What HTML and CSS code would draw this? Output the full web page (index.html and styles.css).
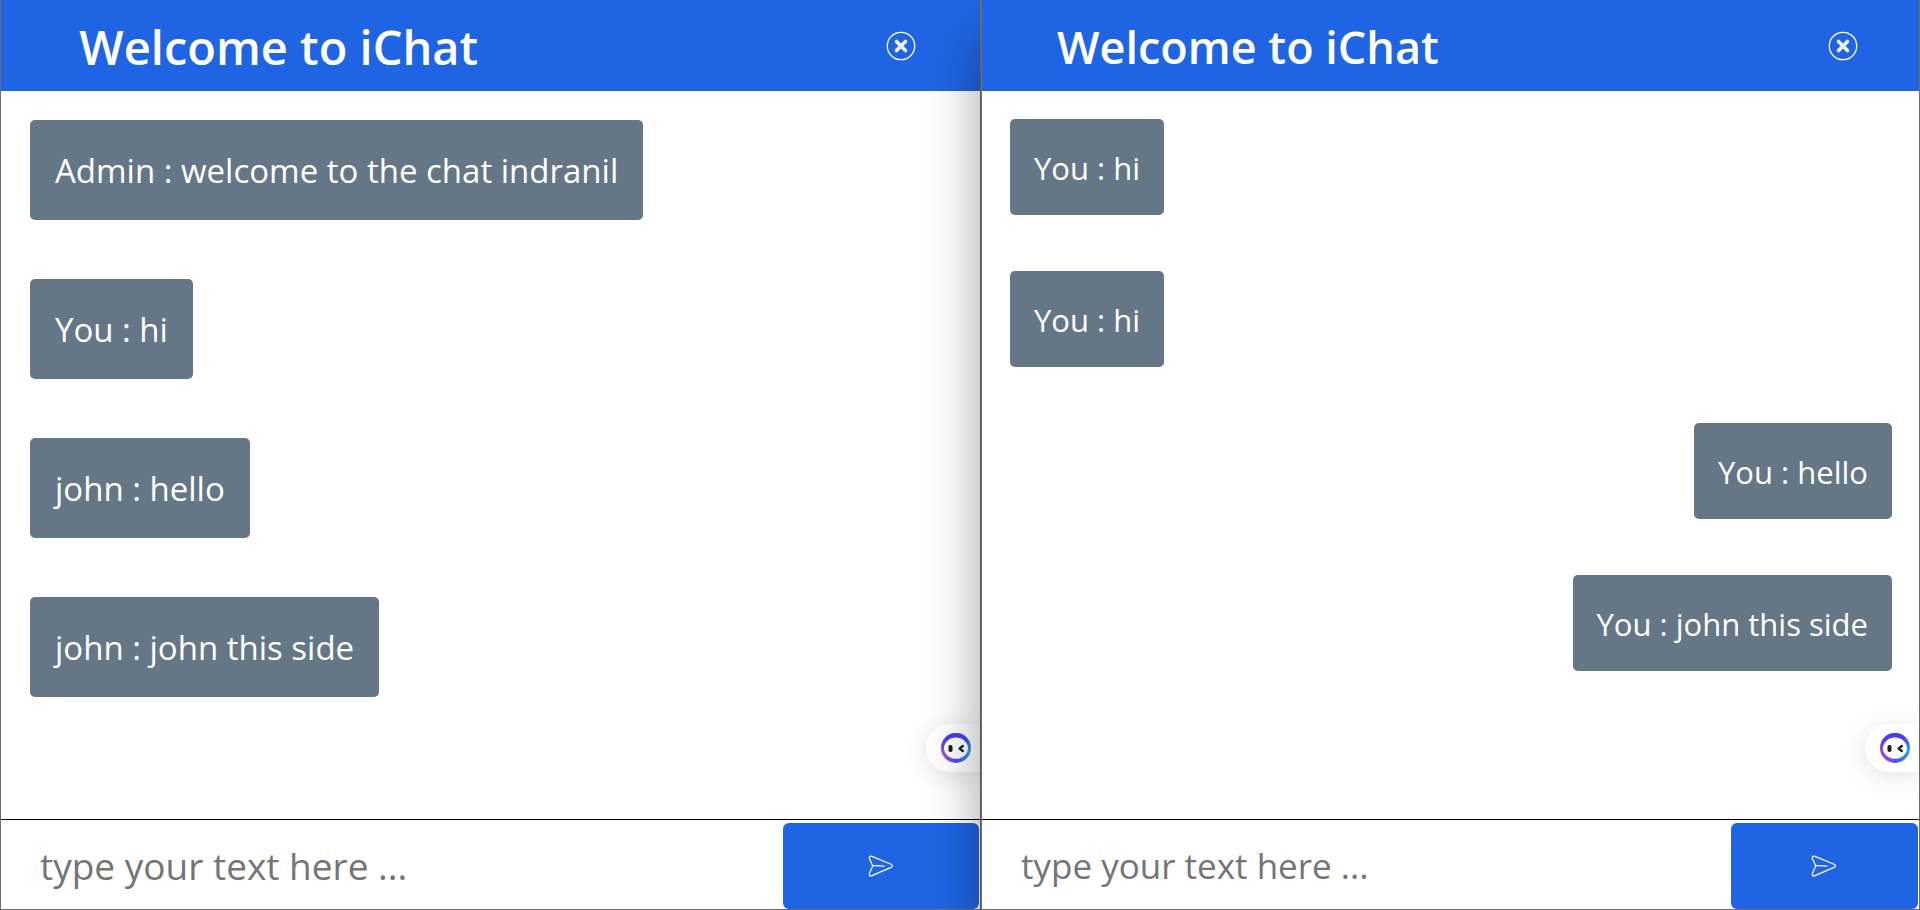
FILE: index.html
```
<!DOCTYPE html>
<html lang="en">
<head>
<meta charset="utf-8">
<title>iChat</title>
<link rel="stylesheet" href="styles.css">
</head>
<body>
<svg class="defs" aria-hidden="true">
  <defs>
    <linearGradient id="ring" x1="0" y1="0.8" x2="1" y2="0.5">
      <stop offset="0" stop-color="#b445d8"/>
      <stop offset="0.45" stop-color="#4b50f5"/>
      <stop offset="1" stop-color="#22b4d8"/>
    </linearGradient>
    <linearGradient id="ring-top" x1="0" y1="0" x2="0" y2="1">
      <stop offset="0.15" stop-color="#4a3cf0"/>
      <stop offset="0.6" stop-color="#4a3cf0" stop-opacity="0"/>
    </linearGradient>
    <symbol id="close" viewBox="0 0 30 30">
      <circle cx="15" cy="15" r="13.7" fill="none" stroke="#fff" stroke-width="1.3"/>
      <path d="M10.5 10.5l9 9M19.5 10.5l-9 9" stroke="#f1f5fe" stroke-width="3.6" stroke-linecap="round"/>
    </symbol>
    <symbol id="send" viewBox="0 0 26 22">
      <path d="M3.4 1.1L23 9.3Q26 11 23 12.4L3.4 20.9Q1 21.3 1.3 18.8L4.7 11L1.3 3.2Q1 .7 3.4 1.1ZM4.7 10.4L16 11.2" fill="none" stroke="#fff" stroke-width="1.2" stroke-linejoin="round" stroke-linecap="round"/>
    </symbol>
    <symbol id="bot" viewBox="0 0 30 30">
      <circle cx="15" cy="15" r="15" fill="url(#ring)"/>
      <circle cx="15" cy="15" r="15" fill="url(#ring-top)"/>
      <ellipse cx="15" cy="15.2" rx="12" ry="10.6" fill="#fff"/>
      <rect x="7.5" y="12" width="4" height="7" rx="1.8" fill="#1c1c1c"/>
      <path d="M21.8 13L18.6 15.6L21.8 18" fill="none" stroke="#1c1c1c" stroke-width="2.4" stroke-linecap="round" stroke-linejoin="round"/>
    </symbol>
  </defs>
</svg>
<main class="desk">
  <section class="chat chat-large">
    <header class="chat-header">
      <h1 class="title">Welcome to iChat</h1>
      <button class="close" type="button" aria-label="Close"><svg class="close-icon"><use href="#close"/></svg></button>
    </header>
    <div class="messages">
      <p class="message">Admin : welcome to the chat indranil</p>
      <p class="message">You : hi</p>
      <p class="message">john : hello</p>
      <p class="message">john : john this side</p>
    </div>
    <form class="composer">
      <input class="field" type="text" placeholder="type your text here ..." aria-label="Message">
      <button class="send" type="button" aria-label="Send"><svg class="send-icon"><use href="#send"/></svg></button>
    </form>
    <button class="assistant" type="button" aria-label="Assistant"><svg class="bot-icon"><use href="#bot"/></svg></button>
  </section>
  <section class="chat chat-front">
    <header class="chat-header">
      <h1 class="title">Welcome to iChat</h1>
      <button class="close" type="button" aria-label="Close"><svg class="close-icon"><use href="#close"/></svg></button>
    </header>
    <div class="messages">
      <p class="message">You : hi</p>
      <p class="message">You : hi</p>
      <p class="message message-own">You : hello</p>
      <p class="message message-own">You : john this side</p>
    </div>
    <form class="composer">
      <input class="field" type="text" placeholder="type your text here ..." aria-label="Message">
      <button class="send" type="button" aria-label="Send"><svg class="send-icon"><use href="#send"/></svg></button>
    </form>
    <button class="assistant" type="button" aria-label="Assistant"><svg class="bot-icon"><use href="#bot"/></svg></button>
  </section>
</main>
</body>
</html>
```
FILE: styles.css
```
* { box-sizing: border-box; }
body {
  margin: 0;
  font-family: "Segoe UI", "Open Sans", "Noto Sans", sans-serif;
  background: #fff;
}
button { border: 0; padding: 0; cursor: pointer; }
.defs { position: absolute; width: 0; height: 0; }
.desk {
  display: grid;
  grid-template-columns: 981fr 939fr;
  height: 100vh;
  overflow: hidden;
}
.chat {
  position: relative;
  display: flex;
  flex-direction: column;
  min-width: 0;
  border: 1px solid #6e6e6e;
  border-top: 0;
  background: #fff;
  --inset: 28px;
  --gap: 56px;
  --pad: 24px;
  --line: 48px;
  --text: 31px;
  --title: 45px;
  --field: 35px;
}
.chat-large {
  --inset: 29px;
  --gap: 59px;
  --pad: 25px;
  --line: 50px;
  --text: 33px;
  --title: 47px;
  --field: 37px;
}
.chat-front {
  z-index: 1;
  box-shadow: 0 40px 50px rgba(0, 0, 0, 0.38);
}
.chat-header {
  display: flex;
  align-items: center;
  justify-content: space-between;
  height: 91px;
  padding: 0 8%;
  padding-right: 6.5%;
  background: #1f65e3;
}
.title {
  margin: 0;
  padding-top: 2px;
  color: #fff;
  font-size: var(--title);
  font-weight: 600;
  white-space: nowrap;
}
.close { display: flex; background: none; }
.close-icon { width: 30px; height: 30px; }
.messages {
  flex: 1;
  display: flex;
  flex-direction: column;
  align-items: flex-start;
  gap: var(--gap);
  padding: var(--inset);
  padding-right: 27px;
}
.message {
  margin: 0;
  padding: calc(var(--pad) + 1px) var(--pad) calc(var(--pad) - 1px);
  border-radius: 5px;
  background: #657786;
  color: #fff;
  font-size: var(--text);
  line-height: var(--line);
}
.message-own { align-self: flex-end; }
.composer {
  display: flex;
  height: 90px;
  padding: 3px 1px 0 0;
  border-top: 1px solid #000;
}
.field {
  flex: 1;
  min-width: 0;
  padding: 0 0 1px 39px;
  border: 0;
  outline: 0;
  background: none;
  font-family: inherit;
  font-size: var(--field);
}
.field::placeholder { color: #757575; opacity: 1; }
.send {
  display: flex;
  align-items: center;
  justify-content: center;
  width: 20%;
  border-radius: 6px;
  background: #1f65e3;
}
.send-icon { width: 26px; height: 22px; }
.assistant {
  position: absolute;
  right: 0;
  bottom: 137px;
  display: flex;
  align-items: center;
  height: 48px;
  padding: 0 9px 0 15px;
  border-radius: 24px 0 0 24px;
  background: #fff;
  box-shadow: 0 4px 24px rgba(0, 0, 0, 0.12);
}
.bot-icon { width: 30px; height: 30px; }
```
